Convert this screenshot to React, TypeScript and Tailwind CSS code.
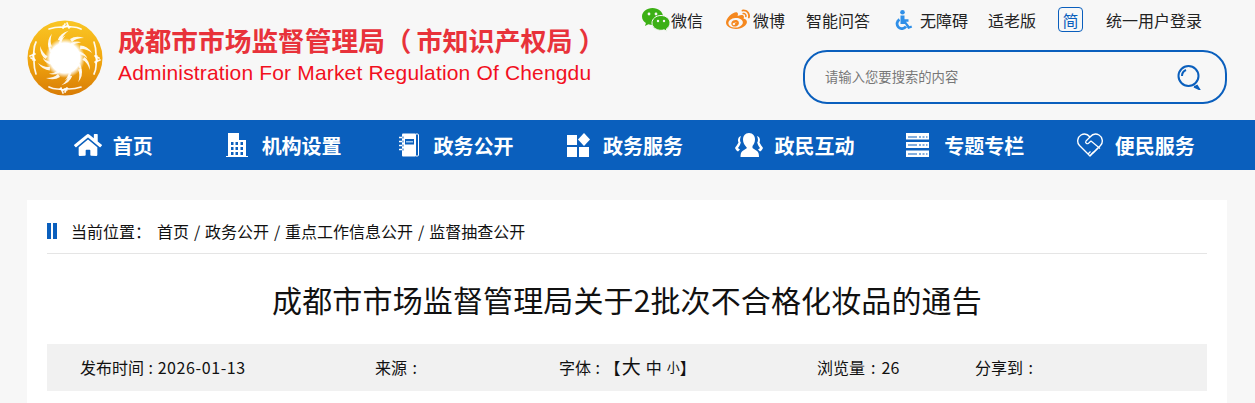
import { FaWeibo, FaHome } from "react-icons/fa"

const font = "font-['Noto_Sans_CJK_SC','Noto_Sans',sans-serif]"

// gold swirl emblem
function Logo() {
  const blades = Array.from({ length: 10 }, (_, i) => i * 36)
  const inner = Array.from({ length: 8 }, (_, i) => i * 45 + 14)
  return (
    <svg width="76" height="76" viewBox="0 0 76 76" className="shrink-0">
      <defs>
        <linearGradient id="gold" x1="0" y1="0" x2="0" y2="1">
          <stop offset="0" stopColor="#f9c625" />
          <stop offset="0.5" stopColor="#f2a80f" />
          <stop offset="1" stopColor="#d87c06" />
        </linearGradient>
        <radialGradient id="core">
          <stop offset="0.75" stopColor="#fff" />
          <stop offset="1" stopColor="#fff" stopOpacity="0" />
        </radialGradient>
      </defs>
      <circle cx="38" cy="38" r="37.500" fill="url(#gold)" />
      <circle cx="38" cy="38" r="20" fill="url(#core)" />
      {blades.map((a) => (
        <path key={a} d="M43 19 Q49 15 57 18 Q49 18 45 22 Z" fill="#fff" fillOpacity="0.9" transform={`rotate(${a} 38 38)`} />
      ))}
      {inner.map((a) => (
        <path key={a} d="M40 22 Q45 18 50 19 Q45 20 41 25 Z" fill="#fff" fillOpacity="0.85" transform={`rotate(${a} 38 38)`} />
      ))}
      {[0, 90, 180, 270].map((a) => (
        <g key={a} transform={`rotate(${a} 38 38)`} fill="none" stroke="#fff" strokeWidth="1.700" strokeLinecap="round" strokeOpacity="0.92">
          <path d="M22 9 Q28 7 34 7 Q37 8 40 6 Q43 7 46 7 Q50 7 54 9" />
          <path d="M38 4 L36 8 M40 3 L42 8 M36 6 L43 7" />
        </g>
      ))}
    </svg>
  )
}

function Wechat() {
  return (
    <svg width="28" height="24" viewBox="0 0 28 24" className="shrink-0">
      <path d="M10.500 0C4.700 0 0 3.800 0 8.500c0 2.700 1.500 5 3.900 6.600L3 18l3.400-1.800c1.300.4 2.700.7 4.100.7 5.800 0 10.500-3.800 10.500-8.400S16.300 0 10.500 0z" fill="#3cb015" />
      <path d="M19 7.500c-5 0-9 3.300-9 7.400s4 7.400 9 7.400c1.100 0 2.200-.2 3.200-.5L25 23.500l-.7-2.500c2.200-1.400 3.700-3.600 3.700-6.100 0-4.100-4-7.400-9-7.400z" fill="#3cb015" stroke="#f7f7f7" strokeWidth="1" />
      <circle cx="7" cy="6" r="1.400" fill="#f7f7f7" />
      <circle cx="14" cy="6" r="1.400" fill="#f7f7f7" />
      <circle cx="16" cy="13" r="1.200" fill="#f7f7f7" />
      <circle cx="22" cy="13" r="1.200" fill="#f7f7f7" />
    </svg>
  )
}

function Wheelchair() {
  return (
    <svg width="19" height="20" viewBox="0 0 19 20" className="shrink-0">
      <circle cx="7.500" cy="2.300" r="2.300" fill="#2f8fe8" />
      <path d="M5.500 5.500h4v3.700h4v2.500h-2.500l3.500 4.600 1.800-.7.900 1.800-4 1.600-3.200-5H5.500z" fill="#2f8fe8" />
      <path d="M4.500 9.500A4.900 4.900 0 1 0 11 16.500" fill="none" stroke="#2f8fe8" strokeWidth="2.800" />
    </svg>
  )
}

function SearchIcon() {
  return (
    <svg width="26" height="26" viewBox="0 0 26 26" fill="none" stroke="#0a5fbd" strokeWidth="2">
      <circle cx="12.500" cy="12" r="10" />
      <path d="M6 12a6.500 6.500 0 0 1 4-6" />
      <path d="M18 22.500l5 2.500-2.500-4" fill="#0a5fbd" />
    </svg>
  )
}

const navIcons = {
  home: <FaHome size={28} color="#fff" />,
  org: (
    <svg width="22" height="24" viewBox="0 0 22 24" fill="#fff">
      <path
        fillRule="evenodd"
        d="M2 0h11v7h7v16h2v1H0v-1h2zM5 9v3h2.500V9zm4.500 0v3H12V9zm5 0v3H17V9zM5 14v3h2.500v-3zm4.500 0v3H12v-3zm5 0v3H17v-3zM5 19v3h2.500v-3zm4.500 0v3H12v-3zm5 0v3H17v-3z"
      />
    </svg>
  ),
  gov: (
    <svg width="20" height="24" viewBox="0 0 20 24" fill="none">
      <rect x="3" y="0.500" width="14" height="23" rx="1" fill="#fff" />
      <path d="M17 1h1.500a1 1 0 0 1 1 1v20a1 1 0 0 1-1 1H17" stroke="#fff" />
      <rect x="6" y="6" width="9" height="5.500" fill="#0a5fbd" />
      <rect x="7" y="8" width="7" height="1.500" fill="#9cc6ef" />
      <path d="M0 4.500h4M0 8.500h4M0 12.500h4M0 16.500h4" stroke="#fff" strokeWidth="1.300" />
      <path d="M4 3.500v2M4 7.500v2M4 11.500v2M4 15.500v2" stroke="#0a5fbd" strokeWidth="1" />
    </svg>
  ),
  service: (
    <svg width="24" height="24" viewBox="0 0 24 24" fill="#fff">
      <rect x="1" y="2" width="10" height="10" />
      <path d="M18 0l6 6.500-6 6.500-6-6.500z" />
      <rect x="1" y="14" width="10" height="10" />
      <rect x="13" y="14" width="10" height="10" />
    </svg>
  ),
  people: (
    <svg width="28" height="24" viewBox="0 0 28 24" fill="#fff">
      <path d="M14 0c4 0 6 3 6 6.500 0 3-1.200 5-2.500 6.500v2l4.500 3c1.500 1 2 3 2 6H5.500c0-3 .5-5 2-6l4.500-3-1.500-2C9.200 11.500 8 9.500 8 6.500 8 3 10 0 14 0z" />
      <path d="M6 3C3 4 2.500 7 3.500 9.500 2 12 1 13.500 0 15c.5 1.500 2 3 3 3.500l2-2c-1-.5-1.500-1-2-1.500 1-1.200 2.200-3 2.800-5.500C4.500 8 5 5 6 3zM22 3c3 1 3.500 4 2.500 6.500 1.500 2.500 2.500 4 3.500 5.500-.5 1.500-2 3-3 3.500l-2-2c1-.5 1.500-1 2-1.500-1-1.200-2.200-3-2.800-5.500C23.500 8 23 5 22 3z" />
    </svg>
  ),
  topic: (
    <svg width="23" height="24" viewBox="0 0 23 24" fill="#fff">
      <path
        fillRule="evenodd"
        d="M0 0h23v6.500H0zm2 3.500v1h9v-1zm11 0v1h2v-1zm3.500 0v1h2v-1zm3.500 0v1h1.500v-1zM0 9h23v6H0zm2 2.500v1h9v-1zm11 0v1h2v-1zm3.500 0v1h2v-1zm3.500 0v1h1.500v-1zM0 17.500h23V24H0zm2 3v1h9v-1zm11 0v1h2v-1zm3.500 0v1h2v-1zm3.500 0v1h1.500v-1z"
      />
    </svg>
  ),
  convenience: (
    <svg width="26" height="24" viewBox="0 0 26 24" fill="none" stroke="#fff" strokeWidth="1.400" strokeLinejoin="round">
      <path d="M13 23L2.500 12.500C-.500 9.500.5 4 4 2c3-1.700 6.500-1 9 2 2.500-3 6-3.700 9-2 3.500 2 4.500 7.500 1.500 10.500z" />
      <path d="M13 4L9 8c-1.200 1.800 1 3.500 2.500 2.300l2.500-2.300 9 7.500" strokeWidth="1.200" />
      <path d="M11 21l2.500-2.500M13.500 22l3-3M16 20l3-3M18.500 17.500l2.500-2.500" strokeWidth="1.200" />
    </svg>
  ),
}

const navItems = [
  { icon: navIcons.home, label: "首页", cls: "gap-[11px]" },
  { icon: navIcons.org, label: "机构设置", cls: "gap-[14px]" },
  { icon: navIcons.gov, label: "政务公开", cls: "gap-[15px] pl-[4px]" },
  { icon: navIcons.service, label: "政务服务", cls: "gap-[13px]" },
  { icon: navIcons.people, label: "政民互动", cls: "gap-[11px]" },
  { icon: navIcons.topic, label: "专题专栏", cls: "gap-[15px]" },
  { icon: navIcons.convenience, label: "便民服务", cls: "gap-[12px]" },
]

export default function App() {
  return (
    <div className={`${font} h-[403px] overflow-hidden bg-[#f7f7f7] text-[#222]`}>
      {/* Header */}
      <header className="flex h-[120px] justify-between pl-[27px] pr-[28px]">
        <div className="flex items-start pt-[20px]">
          <Logo />
          <div className="ml-[15px] mt-[1px]">
            <div className="text-[26.700px] leading-[38px] font-bold whitespace-nowrap text-[#e8323a]">
              成都市市场监督管理局（
              <span className="ml-[5px] text-[26px]">市知识产权局</span>
              <span className="ml-[6px]">）</span>
            </div>
            <div className="font-['Liberation_Sans',sans-serif] text-[21px] leading-[28px] tracking-[0.160px] whitespace-nowrap text-[#f2101e]">
              Administration For Market Regulation Of Chengdu
            </div>
          </div>
        </div>

        <div className="flex flex-col items-end">
          <div className="flex h-[39px] items-center pr-[25px] text-[16px] whitespace-nowrap">
            <Wechat />
            <span className="ml-[1px]">微信</span>
            <FaWeibo size={24} color="#f5881f" className="ml-[23px]" />
            <span className="ml-[3px]">微博</span>
            <span className="ml-[21px]">智能问答</span>
            <span className="ml-[25px]"><Wheelchair /></span>
            <span className="ml-[6px]">无障碍</span>
            <span className="ml-[20px]">适老版</span>
            <span className="ml-[22px] flex h-[25px] w-[25px] items-center justify-center rounded-[4px] border border-[#0a5fbd] text-[#0a5fbd]">简</span>
            <span className="ml-[23px]">统一用户登录</span>
          </div>
          <div className="mt-[11px] flex h-[54px] w-[424px] items-center justify-between rounded-[24px] border-[2px] border-[#0a5fbd] pl-[20px] pr-[23px]">
            <span className="text-[13.330px] text-[#777]">请输入您要搜索的内容</span>
            <SearchIcon />
          </div>
        </div>
      </header>

      {/* Nav */}
      <nav className="h-[50px] bg-[#0a5fbd] pl-[28px]">
        <div className="grid h-full w-[1193px] grid-cols-7">
          {navItems.map((item) => (
            <div key={item.label} className={`flex items-center justify-center ${item.cls} text-[20px] font-bold text-white whitespace-nowrap`}>
              {item.icon}
              <span className="mt-[1px]">{item.label}</span>
            </div>
          ))}
        </div>
      </nav>

      {/* Content card */}
      <main className="ml-[27px] mr-[28px] mt-[30px] h-[300px] bg-white px-[20px]">
        <div className="flex h-[54px] items-center border-b border-[#e5e5e5] pt-[15px] pb-[6px] text-[16px] whitespace-nowrap text-[#111]">
          <span className="flex gap-[2px]">
            <i className="h-[16px] w-[4px] bg-[#0a5fbd]" />
            <i className="h-[16px] w-[4px] bg-[#0a5fbd]" />
          </span>
          <span className="ml-[14px]">当前位置：</span>
          <span className="ml-[6px] [word-spacing:1.300px]">首页 / 政务公开 / 重点工作信息公开 / 监督抽查公开</span>
        </div>

        <h1 className="mt-[23px] text-center text-[30px] leading-[45px] font-normal tracking-[0.130px] text-[#111]">
          成都市市场监督管理局关于2批次不合格化妆品的通告
        </h1>

        <div className="mt-[22px] flex h-[47px] items-center bg-[#f1f1f1] pb-[2px] pl-[33px] text-[16px] whitespace-nowrap text-[#111]">
          <span className="w-[295px] [word-spacing:1px]">
            发布时间 : <span className="tracking-[0.600px]">2026-01-13</span>
          </span>
          <span className="w-[184px] [word-spacing:2px]">来源 :</span>
          <span className="flex w-[258px] items-center whitespace-pre [word-spacing:1px]">
            字体 : 【<span className="ml-[1px] text-[19px]">大</span>
            <span className="ml-[5px] text-[16px]">中</span>
            <span className="ml-[5px] text-[13px]">小</span>】
          </span>
          <span className="w-[158px] [word-spacing:2.500px]">浏览量 : 26</span>
          <span className="[word-spacing:2px]">分享到 :</span>
        </div>
      </main>
    </div>
  )
}
